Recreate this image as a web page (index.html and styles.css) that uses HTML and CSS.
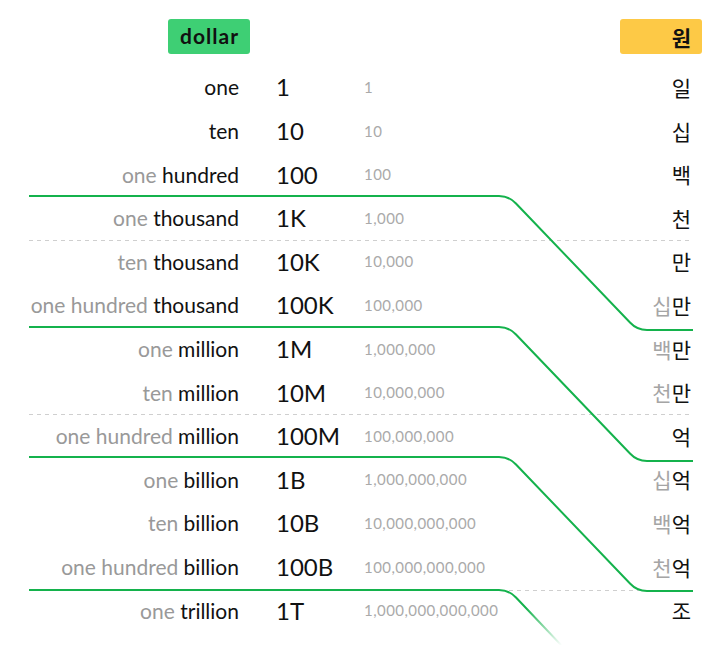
FILE: index.html
```html
<!DOCTYPE html>
<html lang="en">
<head>
<meta charset="utf-8">
<title>dollar / 원</title>
<link rel="stylesheet" href="styles.css">
</head>
<body>
<div class="page">
  <div class="header">
    <span class="badge badge-dollar">dollar</span>
    <span class="badge badge-won">원</span>
  </div>
  <div class="rows">
    <div class="row"><span class="en">one</span><span class="abbr">1</span><span class="num">1</span><span class="ko">일</span></div>
    <div class="row"><span class="en">ten</span><span class="abbr">10</span><span class="num">10</span><span class="ko">십</span></div>
    <div class="row"><span class="en"><span class="mute">one</span> hundred</span><span class="abbr">100</span><span class="num">100</span><span class="ko">백</span></div>
    <div class="row"><span class="en"><span class="mute">one</span> thousand</span><span class="abbr">1K</span><span class="num">1,000</span><span class="ko">천</span></div>
    <div class="row"><span class="en"><span class="mute">ten</span> thousand</span><span class="abbr">10K</span><span class="num">10,000</span><span class="ko">만</span></div>
    <div class="row"><span class="en"><span class="mute">one hundred</span> thousand</span><span class="abbr">100K</span><span class="num">100,000</span><span class="ko"><span class="mute">십</span>만</span></div>
    <div class="row"><span class="en"><span class="mute">one</span> million</span><span class="abbr">1M</span><span class="num">1,000,000</span><span class="ko"><span class="mute">백</span>만</span></div>
    <div class="row"><span class="en"><span class="mute">ten</span> million</span><span class="abbr">10M</span><span class="num">10,000,000</span><span class="ko"><span class="mute">천</span>만</span></div>
    <div class="row"><span class="en"><span class="mute">one hundred</span> million</span><span class="abbr">100M</span><span class="num">100,000,000</span><span class="ko">억</span></div>
    <div class="row"><span class="en"><span class="mute">one</span> billion</span><span class="abbr">1B</span><span class="num">1,000,000,000</span><span class="ko"><span class="mute">십</span>억</span></div>
    <div class="row"><span class="en"><span class="mute">ten</span> billion</span><span class="abbr">10B</span><span class="num">10,000,000,000</span><span class="ko"><span class="mute">백</span>억</span></div>
    <div class="row"><span class="en"><span class="mute">one hundred</span> billion</span><span class="abbr">100B</span><span class="num">100,000,000,000</span><span class="ko"><span class="mute">천</span>억</span></div>
    <div class="row"><span class="en"><span class="mute">one</span> trillion</span><span class="abbr">1T</span><span class="num">1,000,000,000,000</span><span class="ko">조</span></div>
  </div>
  <svg class="lines" width="720" height="645" viewBox="0 0 720 645" aria-hidden="true">
    <defs>
      <linearGradient id="fade" x1="505" y1="590" x2="562" y2="645" gradientUnits="userSpaceOnUse">
        <stop offset="0" stop-color="#14b24c" stop-opacity="1"/>
        <stop offset="0.35" stop-color="#14b24c" stop-opacity="1"/>
        <stop offset="1" stop-color="#14b24c" stop-opacity="0"/>
      </linearGradient>
    </defs>
    <g class="dash">
      <line x1="29" y1="240.5" x2="693" y2="240.5"/>
      <line x1="29" y1="414.5" x2="693" y2="414.5"/>
      <line x1="29" y1="590.5" x2="693" y2="590.5"/>
    </g>
    <g class="green">
      <path d="M29 196 H499 Q509 196 516 203.5 L630 322.5 Q637 330 647 330 H693"/>
      <path d="M29 327 H499 Q509 327 516 334.5 L630 453.5 Q637 461 647 461 H693"/>
      <path d="M29 457 H499 Q509 457 516 464.5 L630 583.5 Q637 591 647 591 H693"/>
      <path class="fade" d="M29 590 H499 Q509 590 516 597.5 L562 646"/>
    </g>
  </svg>
</div>
</body>
</html>
```
FILE: styles.css
```css
* { box-sizing: border-box; }
html, body { margin: 0; padding: 0; background: #fff; }
body {
  font-family: Lato, "Noto Sans", "Noto Sans CJK KR", sans-serif;
  color: #111;
}
.page {
  position: relative;
  width: 720px;
  height: 645px;
  overflow: hidden;
}
.header {
  display: flex;
  justify-content: space-between;
  padding: 19px 18px 0 168px;
}
.badge {
  display: flex;
  align-items: center;
  justify-content: flex-end;
  width: 82px;
  height: 35px;
  padding: 0 11px 0 12px;
  border-radius: 3px;
  color: #111;
}
.badge-dollar {
  background: #3ecf74;
  font-family: Lato, sans-serif;
  font-weight: 700;
  font-size: 21px;
  letter-spacing: 1px;
  padding-bottom: 2px;
}
.badge-won {
  background: #fdc946;
  font-family: "Noto Sans CJK KR", sans-serif;
  font-weight: 700;
  font-size: 21px;
}
.rows {
  margin-top: 11.2px;
}
.row {
  display: grid;
  grid-template-columns: 210px 125px 1fr auto;
  align-items: center;
  height: 43.6px;
  padding: 0 29px;
}
.en {
  text-align: right;
  font-size: 21px;
  color: #111;
  white-space: nowrap;
}
.mute { color: #999; }
.abbr {
  padding-left: 37px;
  font-size: 24px;
  color: #111;
}
.num {
  font-size: 15px;
  color: #aaa;
  letter-spacing: 0.45px;
}
.ko {
  font-family: "Noto Sans CJK KR", sans-serif;
  font-size: 21px;
  text-align: right;
  color: #111;
}
.ko .mute { color: #a5a5a5; }
.lines {
  position: absolute;
  top: 0;
  left: 0;
  pointer-events: none;
}
.dash line {
  stroke: #cfcfcf;
  stroke-width: 1;
  stroke-dasharray: 4 4;
}
.green path {
  fill: none;
  stroke: #14b24c;
  stroke-width: 2;
}
.green path.fade { stroke: url(#fade); }
```
